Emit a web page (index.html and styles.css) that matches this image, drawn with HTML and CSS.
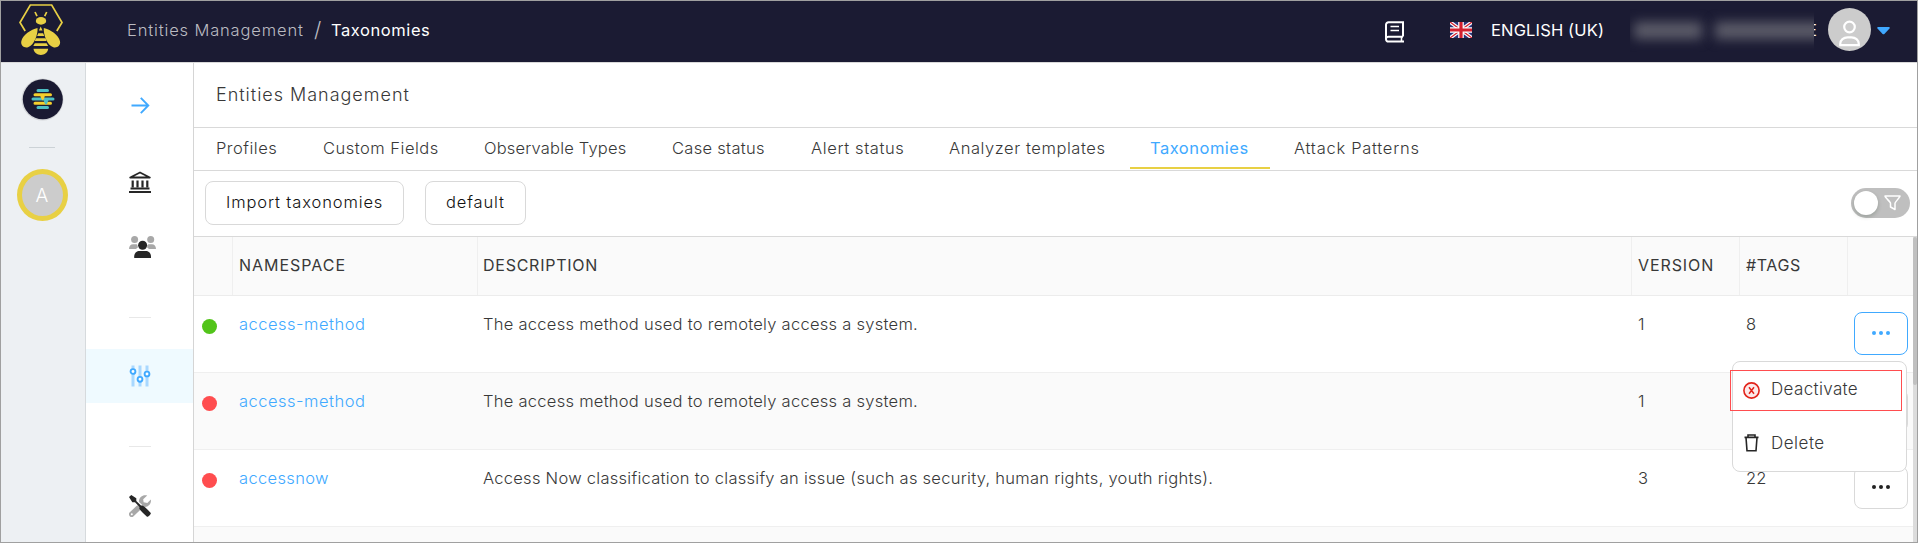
FILE: index.html
```
<!DOCTYPE html>
<html lang="en">
<head>
<meta charset="utf-8">
<title>Taxonomies</title>
<link rel="stylesheet" href="styles.css">
</head>
<body>
<div class="app">
  <header class="topbar">
    <svg class="logo" width="44" height="53" viewBox="19 3 44 53">
      <path d="M25.2 31 20 22.5 30.3 5h21.4L62 22.500 56.800 31M35 12l2 4.200M46.700 12l-2 4.200" fill="none" stroke="#e8d044" stroke-width="1.700"/>
      <g fill="#e8d044">
        <ellipse cx="41" cy="20.900" rx="5.200" ry="3.800"/>
        <path d="M37.500 28c.5 6-3 17-9.500 19.300-4 1-7.500-1.800-6.700-6C22.500 35 31 29.500 37.500 28zM43.800 28c-.5 6 3 17 9.500 19.300 4 1 7.500-1.800 6.700-6C58.800 35 50.300 29.500 43.800 28z"/>
        <path d="M40.700 26.500l1.800 4h-3.600zM38.300 33.300h4.800l1.200 2.700h-7.200zM35.800 38.300h9.800l1 2.600H34.800zM34.800 43.300h11.800l1.500 2.600H33.300zM33.500 48.700h14.700c-.6 4-3.600 6.200-7.300 6.200s-6.800-2.200-7.400-6.200z"/>
      </g>
    </svg>
    <nav class="crumbs">
      <a class="crumb">Entities Management</a><span class="slash">/</span><span class="crumb-current">Taxonomies</span>
    </nav>
    <div class="tools">
      <svg class="book" width="19" height="22" viewBox="0 0 19 22" fill="none" stroke="#fff" stroke-width="2">
        <path d="M18 15.500V1.200H3.500A2.500 2.500 0 0 0 1 3.700v14.500a2.400 2.400 0 0 0 2.500 2.400H19M18 15.700H3.500A2.400 2.400 0 0 0 1 18"/>
        <path d="M16.500 16v4.500M5.500 5.500h8.500M5.500 9.500h8.500" stroke-width="1.600"/>
      </svg>
      <svg class="flag" width="22" height="16" viewBox="0 0 22 16">
        <path fill="#29337a" d="M0 0h22v16H0z"/>
        <path d="M0 0l22 16M22 0L0 16" stroke="#fff" stroke-width="3.600"/>
        <path d="M0 0l22 16M22 0L0 16" stroke="#d32030" stroke-width="1.300"/>
        <path d="M11 0v16M0 8h22" stroke="#fff" stroke-width="5.600"/>
        <path d="M11 0v16M0 8h22" stroke="#d32030" stroke-width="3.200"/>
      </svg>
      <span class="lang">ENGLISH (UK)</span>
      <div class="user-name"><span class="veil"><i></i><i></i></span><span class="tail">E</span></div>
      <svg class="avatar" width="43" height="43" viewBox="0 0 43 43">
        <circle cx="21.500" cy="21.500" r="21.500" fill="#ccc"/>
        <g fill="none" stroke="#fff" stroke-width="2.200"><circle cx="21.500" cy="19" r="5.300"/><path d="M12.200 37.200v-1.200c0-4 3.500-6.700 7.300-6.700h4c3.800 0 7.300 2.700 7.300 6.700v1.200z"/></g>
      </svg>
      <svg class="caret" width="13" height="8" viewBox="0 0 13 8"><path d="M1 0h11q1.200.4.500 1.400L7.400 6.900q-.9.900-1.800 0L.5 1.400Q-.2.4 1 0z" fill="#40a9ff"/></svg>
    </div>
  </header>

  <div class="body">
    <aside class="rail">
      <svg class="org" width="43" height="43" viewBox="0 0 43 43">
        <circle cx="21.500" cy="21.500" r="21" fill="#d3d5d8"/><circle cx="21.800" cy="21.300" r="20" fill="#1a1a32"/>
        <g stroke-linecap="round" stroke-width="3">
          <path d="M17 12.500h9.500M17 29.500h9.500" stroke="#4dbfc4"/>
          <path d="M14 16.700h15.500M14 25.300h15.500" stroke="#f5cf2c"/>
          <path d="M12 21h20" stroke="#4dbfc4"/>
        </g>
        <path d="M19 17h5l-1 4-1.500 1.500L20 20z" fill="#f5cf2c"/><path d="M22.500 22h5L26 26l-1.300.8L23.500 25z" fill="#4dbfc4"/>
      </svg>
      <span class="rail-line"></span>
      <span class="org-active">A</span>
    </aside>

    <nav class="side">
      <a class="side-item expand"><svg width="19" height="17" viewBox="0 0 19 17" fill="none" stroke="#40a9ff" stroke-width="1.900"><path d="M.5 8.500h17M9.800.8l7.500 7.700-7.500 7.700"/></svg></a>
      <a class="side-item bank"><svg width="22" height="22" viewBox="0 0 22 22">
        <path d="M1.200 6.500 11 1.500l9.800 5z" fill="none" stroke="#262626" stroke-width="1.800" stroke-linejoin="round"/>
        <path d="M3.700 9.500v7M8.500 9.500v7M13.500 9.500v7M18.300 9.500v7" stroke="#262626" stroke-width="2.200"/><path d="M1.500 17.500h19M0 21h22" stroke="#262626" stroke-width="1.900"/></svg></a>
      <a class="side-item people"><svg width="28" height="22" viewBox="0 0 28 22">
        <g fill="#a8a8a8"><circle cx="5.600" cy="3.500" r="3.500"/><circle cx="21.700" cy="3.500" r="3.500"/><path d="M0 13c0-3 1.800-4.700 4-4.700h3.500c1 0 1 1.700 1.500 2.900L7 13zM27 13c0-3-1.800-4.700-4-4.700h-3.500c-1 0-1 1.700-1.500 2.900l2 1.800z"/></g>
        <circle cx="13.600" cy="9.200" r="4.500" fill="#262626"/><path d="M5.200 22v-1.500c0-3.400 2.500-5.500 5.400-5.500h6c2.900 0 5.400 2.100 5.400 5.500V22z" fill="#262626"/></svg></a>
      <span class="side-line"></span>
      <a class="side-item active"><svg width="22" height="22" viewBox="0 0 22 22">
        <path d="M4 .5v21M11 .5v21M18 .5v21" stroke="#a9d8ff" stroke-width="3"/>
        <g fill="#fff" stroke="#40a9ff" stroke-width="1.900"><circle cx="4" cy="6.500" r="2.400"/><circle cx="11" cy="14.300" r="2.400"/><circle cx="18" cy="9" r="2.400"/></g></svg></a>
      <span class="side-line"></span>
      <a class="side-item wrench"><svg width="22" height="22" viewBox="0 0 22 22">
        <path d="M2.700 19.300 9 13.200" stroke="#a8a8a8" stroke-width="5.400" stroke-linecap="round"/>
        <path d="M18.200.6C14-.8 9.500 2.500 10 7l5.500 5c4 .3 7.200-3.500 6.300-7.500L18.300 8 14.600 7.300 14.200 4.200z" fill="#a8a8a8"/>
        <circle cx="2.800" cy="19.200" r="1" fill="#fff"/>
        <path d="M0 2 2.300 0l5 3.200v2.700L12 10.500l1.800-.1c2.500 1.600 5.500 5 8 7.600.5 1-2.800 4.300-3.800 3.800-2.700-2.400-6-5.700-7.700-8L10.500 12 6 7.300H3.300z" fill="#262626"/></svg></a>
    </nav>

    <main class="main">
      <h1 class="title">Entities Management</h1>
      <nav class="tabs">
        <a class="tab profiles">Profiles</a><a class="tab custom">Custom Fields</a><a class="tab observable">Observable Types</a><a class="tab cases">Case status</a><a class="tab alerts">Alert status</a><a class="tab analyzer">Analyzer templates</a><a class="tab taxonomies">Taxonomies</a><a class="tab attack">Attack Patterns</a>
      </nav>
      <div class="actions">
        <button class="btn import">Import taxonomies</button><button class="btn default">default</button>
        <div class="toggle"><span class="knob"></span><svg width="17" height="16" viewBox="0 0 17 16" fill="none" stroke="#fff" stroke-width="1.500" stroke-linejoin="round"><path d="M1 1h15c0 1.500-5 6-5 7.300V14.500L6.500 12V8.300C6.500 7 1 2.500 1 1z"/></svg></div>
      </div>
      <div class="table-wrap">
        <div class="table">
          <div class="row head"><span></span><span class="h-ns">NAMESPACE</span><span class="h-desc">DESCRIPTION</span><span class="h-ver">VERSION</span><span class="h-tags">#TAGS</span><span></span></div>
          <div class="row">
            <span class="status"><i class="dot on"></i></span><a class="link">access-method</a><span class="desc">The access method used to remotely access a system.</span><span>1</span><span>8</span>
            <div class="cell-more"><button class="more open"><i></i><i></i><i></i></button>
              <div class="menu">
                <a class="menu-item highlighted"><svg width="17" height="17" viewBox="0 0 17 17"><circle cx="8.500" cy="8.500" r="7.600" fill="#fdeaea" stroke="#e2231a" stroke-width="1.600"/><path d="M6 5.300l5 6.400M11 5.300l-5 6.400" stroke="#e2231a" stroke-width="1.500"/></svg><span class="deactivate">Deactivate</span></a>
                <a class="menu-item remove"><svg width="17" height="18" viewBox="0 0 17 18" fill="none" stroke="#262626" stroke-width="1.600"><path d="M1.500 3.400h14M5 3.200V1h7v2.200M3 3.500l1 13.300h9L14 3.500"/></svg><span class="delete">Delete</span></a>
              </div>
            </div>
          </div>
          <div class="row striped">
            <span class="status"><i class="dot"></i></span><a class="link">access-method</a><span class="desc">The access method used to remotely access a system.</span><span>1</span><span></span>
            <div class="cell-more"><button class="more"><i></i><i></i><i></i></button></div>
          </div>
          <div class="row">
            <span class="status"><i class="dot"></i></span><a class="link short">accessnow</a><span class="desc">Access Now classification to classify an issue (such as security, human rights, youth rights).</span><span>3</span><span>22</span>
            <div class="cell-more"><button class="more"><i></i><i></i><i></i></button></div>
          </div>
          <div class="row striped"></div>
        </div>
        <div class="scroll"><span></span></div>
      </div>
    </main>
  </div>
</div>
</body>
</html>
```
FILE: styles.css
```
* { box-sizing: border-box; }
body { margin: 0; font: 300 16.5px/24px Inter, "Open Sans", sans-serif; color: #383838; background: #fff; }
svg { display: block; flex: none; }
.app { width: 1918px; height: 543px; border: 1px solid #a0a0a0; display: flex; flex-direction: column; overflow: hidden; }

.topbar { height: 62px; flex: none; background: #1b1b33; border-bottom: 1px solid #d9d9d9; display: flex; color: #fff; }
.logo { margin: 2px 0 0 18px; }
.crumbs { display: flex; margin: 17px 0 0 64px; white-space: nowrap; }
.crumb { width: 187px; color: #bbbbc2; letter-spacing: .85px; }
.slash { width: 17px; font-size: 21px; line-height: 23px; color: #bbbbc2; }
.crumb-current { font-weight: 400; letter-spacing: .57px; }
.tools { margin-left: auto; display: flex; align-items: flex-start; }
.book { margin-top: 20px; }
.flag { margin: 21px 0 0 46px; }
.lang { margin: 17px 0 0 19px; width: 139px; font-weight: 400; letter-spacing: .15px; }
.user-name { display: flex; width: 190px; height: 43px; margin-top: 8px; }
.veil { position: relative; z-index: 1; width: 184px; flex: none; overflow: hidden; display: flex; gap: 13px; padding: 13px 0 0 4px; background: #1b1b33; }
.veil i { height: 17px; width: 68px; background: #5c5c69; filter: blur(6px); flex: none; }
.veil i + i { width: 112px; }
.tail { margin: 9px 0 0 -7px; font-weight: 400; }
.avatar { margin: 7px 0 0 8px; }
.caret { margin: 26px 27px 0 6px; }

.body { flex: 1; display: flex; min-height: 0; }
.rail { width: 85px; flex: none; background: #edf0f3; border-right: 1px solid #d6dadd; display: flex; flex-direction: column; align-items: center; padding: 15px 2px 0 0; }
.rail-line { width: 26px; height: 1px; background: #ccd2d6; margin: 26px 0 21px; }
.org-active { width: 51px; height: 52px; border-radius: 50%; border: 5px solid #e8d044; background: #ccc; color: #fff; text-align: center; font-size: 19px; line-height: 44px; font-weight: 300; }

.side { width: 108px; flex: none; border-right: 1px solid #d5d5d5; display: flex; flex-direction: column; }
.side-item { height: 54px; flex: none; display: flex; align-items: center; padding-left: 43px; }
.expand { margin-top: 15px; padding-left: 45px; }
.bank { margin-top: 23px; }
.people { margin-top: 11px; }
.side-line { width: 22px; height: 1px; background: #e8e8e8; margin: 43px 0 31px 43px; flex: none; }
.active { background: #effaff; }
.active + .side-line { margin-bottom: 32px; }

.main { flex: 1; min-width: 0; display: flex; flex-direction: column; }
.title { margin: 0; height: 65px; padding-left: 22px; border-bottom: 1px solid #d9d9d9; font-size: 18px; font-weight: 300; line-height: 64px; letter-spacing: .98px; flex: none; }
.tabs { height: 43px; flex: none; border-bottom: 1px solid #d9d9d9; display: flex; }
.tab { height: 41px; line-height: 40px; white-space: nowrap; padding-left: 22px; flex: none; }
.profiles { width: 107px; letter-spacing: .5px; }
.custom { width: 161px; letter-spacing: .5px; }
.observable { width: 188px; letter-spacing: .18px; }
.cases { width: 139px; letter-spacing: .3px; }
.alerts { width: 138px; letter-spacing: .62px; }
.analyzer { width: 203px; letter-spacing: .57px; }
.taxonomies { width: 140px; padding-left: 20px; font-weight: 400; color: #40a9ff; border-bottom: 2px solid #e8d044; letter-spacing: .5px; }
.attack { letter-spacing: .73px; padding-left: 24px; }
.actions { height: 66px; flex: none; border-bottom: 1px solid #d9d9d9; display: flex; padding: 10px 7px 0 11px; }
.btn { height: 44px; border: 1px solid #d9d9d9; border-radius: 8px; background: #fff; font: inherit; line-height: 41px; color: #111; padding: 0 0 1px 20px; text-align: left; white-space: nowrap; }
.import { width: 199px; letter-spacing: .88px; }
.default { width: 101px; margin-left: 21px; letter-spacing: .85px; }
.toggle { width: 59px; height: 30px; margin: 7px 0 0 auto; border-radius: 15px; background: #bfbfbf; display: flex; align-items: center; padding: 0 9px 0 3px; justify-content: space-between; }
.knob { width: 24px; height: 24px; border-radius: 50%; background: #fff; box-shadow: 0 2px 4px rgba(0, 35, 11, .2); }

.table-wrap { flex: 1; min-height: 0; display: flex; }
.table { flex: 1; min-width: 0; }
.row { height: 77px; display: grid; grid-template-columns: 39px 245px 1154px 108px 108px 65px; border-bottom: 1px solid #efefef; }
.row > span, .row > a { padding: 16px 0 0 6px; white-space: nowrap; }
.striped { background: #fafafa; }
.head { height: 59px; background: #fafafa; font-size: 16px; font-weight: 400; border-bottom-color: #ececec; }
.head > span { border-right: 1px solid #efefef; line-height: 57px; padding-top: 0; }
.head > span:last-child { border-right: 0; }
.h-ns { letter-spacing: .97px; }
.head > .h-desc { letter-spacing: .75px; padding-left: 5px; }
.h-ver { letter-spacing: .9px; }
.h-tags { letter-spacing: .6px; }
.row > .status { padding: 23px 0 0 8px; }
.dot { display: block; width: 15px; height: 15px; border-radius: 50%; background: #ff4d4f; }
.on { background: #52c41a; }
.link { color: #40a9ff; letter-spacing: .5px; }
.short { letter-spacing: .35px; }
.row > .desc { padding-left: 5px; letter-spacing: .27px; }
.cell-more { position: relative; padding: 16px 0 0 6px; }
.more { width: 54px; height: 43px; border: 1px solid #d9d9d9; border-radius: 8px; background: #fff; display: flex; align-items: center; justify-content: center; gap: 3px; padding: 0 1px 1px 0; }
.more i { width: 4px; height: 4px; border-radius: 50%; background: #222; }
.open { border-color: #40a9ff; }
.open i { background: #40a9ff; }
.menu { position: absolute; z-index: 2; top: 65px; right: 6px; width: 175px; height: 111px; border: 1px solid #d9d9d9; border-radius: 8px; background: #fff; padding-top: 8px; font-size: 17px; }
.menu-item { height: 41px; display: flex; align-items: center; gap: 11px; }
.highlighted { width: 172px; margin-left: -3px; padding-left: 12px; border: 1px solid #ff4d4f; line-height: 37px; }
.highlighted svg { margin-top: -1px; }
.highlighted span { height: 39px; }
.remove { margin-top: 11px; padding-left: 10px; }
.deactivate { letter-spacing: .35px; }
.delete { letter-spacing: .5px; }
.scroll { width: 4px; background: #dcdcdc; }
.scroll span { display: block; height: 148px; border-radius: 2px; background: #c0c0c0; }
```
